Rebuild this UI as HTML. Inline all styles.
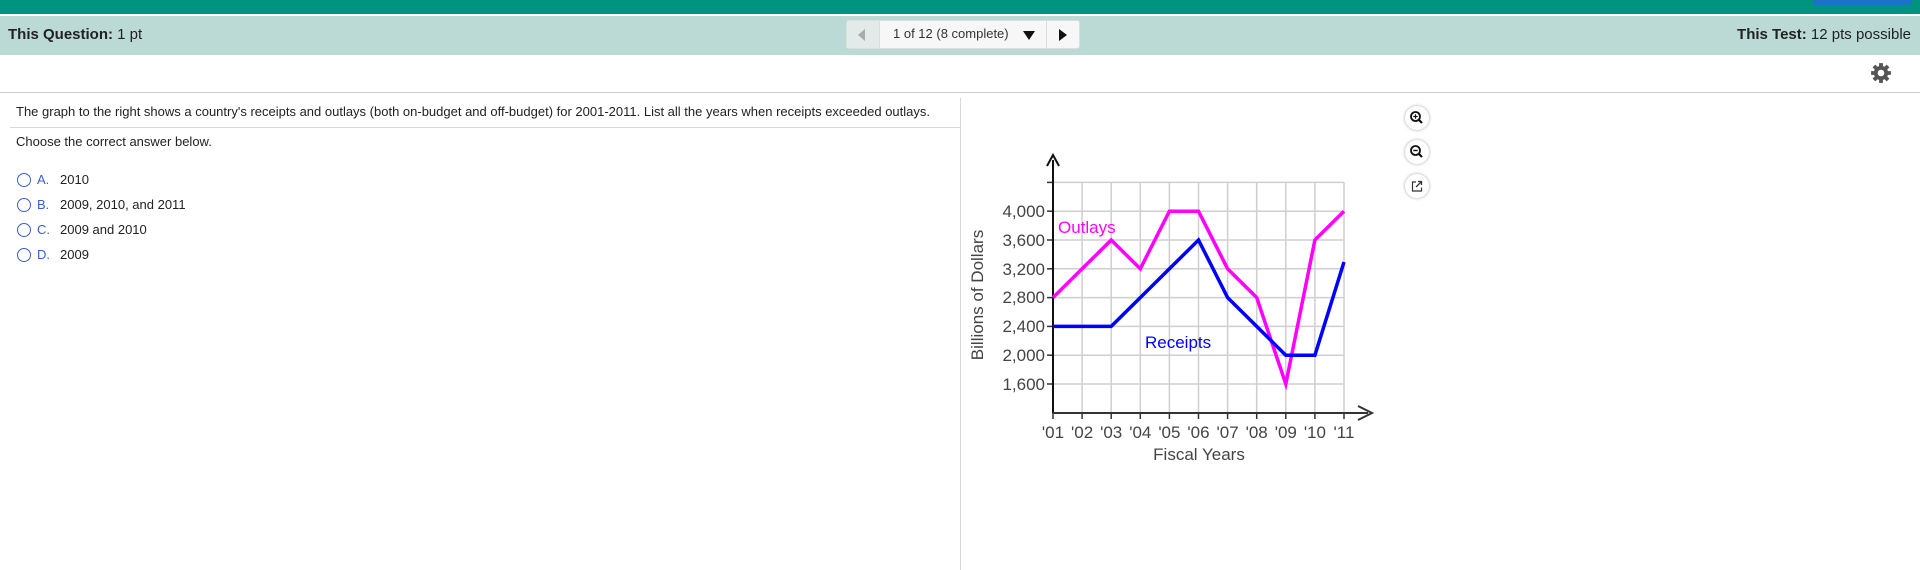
<!DOCTYPE html>
<html><head><meta charset="utf-8"><style>
*{margin:0;padding:0;box-sizing:border-box}
body{width:1920px;height:570px;overflow:hidden;background:#fff;font-family:"Liberation Sans",Arial,sans-serif;position:relative}
.abs{position:absolute}
.q{font-size:13px;color:#222;white-space:nowrap}
.opt{position:absolute;left:17px;font-size:13px;color:#222;white-space:nowrap;height:16px;line-height:16px}
.opt .c{position:absolute;left:0;top:1px;width:14px;height:14px;border:1.5px solid #3a5fcd;border-radius:50%}
.opt .l{position:absolute;left:20px;color:#3a5fcd}
.opt .t{position:absolute;left:43px}
.ib{position:absolute;left:1405px;width:24px;height:24px;border-radius:50%;background:#fff;box-shadow:0 0 3px rgba(0,0,0,.35)}
</style></head><body>
<div class="abs" style="left:0;top:0;width:1920px;height:14px;background:#009380"></div>
<div class="abs" style="left:1813px;top:0;width:99px;height:5px;background:#1b73c9;border-radius:0 0 3px 3px"></div>
<div class="abs" style="left:0;top:16px;width:1920px;height:39px;background:#bcdad5"></div>
<div class="abs" style="left:8px;top:26px;font-size:15px;color:#222"><b>This Question:</b> 1 pt</div>
<div class="abs" style="right:9px;top:26px;font-size:15px;color:#222"><b>This Test:</b> 12 pts possible</div>
<div class="abs" style="left:846px;top:20px;width:234px;height:29px;background:#f7f7f7;border:1px solid #ddd;border-radius:3px"></div>
<div class="abs" style="left:847px;top:21px;width:32px;height:27px;background:#e2ebea"></div>
<div class="abs" style="left:879px;top:21px;width:1px;height:27px;background:#ddd"></div>
<div class="abs" style="left:1046px;top:21px;width:1px;height:27px;background:#ddd"></div>
<div class="abs" style="left:858px;top:29px;width:0;height:0;border-top:6px solid transparent;border-bottom:6px solid transparent;border-right:7px solid #aaa"></div>
<div class="abs" style="left:893px;top:26px;font-size:13px;color:#333">1 of 12 (8 complete)</div>
<div class="abs" style="left:1023px;top:31px;width:0;height:0;border-left:6px solid transparent;border-right:6px solid transparent;border-top:9px solid #111"></div>
<div class="abs" style="left:1059px;top:29px;width:0;height:0;border-top:6px solid transparent;border-bottom:6px solid transparent;border-left:8px solid #111"></div>
<svg class="abs" style="left:1870px;top:62px" width="22" height="22" viewBox="0 0 20 20"><g fill="#555"><circle cx="10" cy="10" r="6.5"/><g stroke="#555" stroke-width="3.5"><line x1="10" y1="1" x2="10" y2="19"/><line x1="1" y1="10" x2="19" y2="10"/><line x1="3.6" y1="3.6" x2="16.4" y2="16.4"/><line x1="16.4" y1="3.6" x2="3.6" y2="16.4"/></g></g><circle cx="10" cy="10" r="3" fill="#fff"/></svg>
<div class="abs" style="left:0;top:92px;width:1920px;height:1px;background:#ccccd8"></div>
<div class="abs" style="left:960px;top:98px;width:1px;height:472px;background:#d6d6e4"></div>
<div class="abs q" style="left:16px;top:104px">The graph to the right shows a country's receipts and outlays (both on-budget and off-budget) for 2001-2011. List all the years when receipts exceeded outlays.</div>
<div class="abs" style="left:10px;top:127px;width:950px;height:1px;background:#d6d6e4"></div>
<div class="abs q" style="left:16px;top:134px">Choose the correct answer below.</div>
<div class="opt" style="top:172px"><span class="c"></span><span class="l">A.</span><span class="t">2010</span></div>
<div class="opt" style="top:197px"><span class="c"></span><span class="l">B.</span><span class="t">2009, 2010, and 2011</span></div>
<div class="opt" style="top:222px"><span class="c"></span><span class="l">C.</span><span class="t">2009 and 2010</span></div>
<div class="opt" style="top:247px"><span class="c"></span><span class="l">D.</span><span class="t">2009</span></div>
<div class="ib" style="top:106px"><svg width="24" height="24"><circle cx="10.5" cy="10.5" r="4.5" fill="none" stroke="#111" stroke-width="1.8"/><line x1="13.5" y1="13.5" x2="17" y2="17" stroke="#111" stroke-width="2.2"/><line x1="8.3" y1="10.5" x2="12.7" y2="10.5" stroke="#111" stroke-width="1.2"/><line x1="10.5" y1="8.3" x2="10.5" y2="12.7" stroke="#111" stroke-width="1.2"/></svg></div>
<div class="ib" style="top:140px"><svg width="24" height="24"><circle cx="10.5" cy="10.5" r="4.5" fill="none" stroke="#111" stroke-width="1.8"/><line x1="13.5" y1="13.5" x2="17" y2="17" stroke="#111" stroke-width="2.2"/><line x1="8.3" y1="10.5" x2="12.7" y2="10.5" stroke="#111" stroke-width="1.4"/></svg></div>
<div class="ib" style="top:174px"><svg width="24" height="24"><path d="M11 8H7.5v9h9v-3.5" fill="none" stroke="#333" stroke-width="1.2"/><path d="M11 13l5-5M13 7.5h3.5V11" fill="none" stroke="#333" stroke-width="1.3"/></svg></div>
<svg class="abs" style="left:0;top:0" width="1920" height="570">
<g stroke="#cfcfcf" stroke-width="1.5">
<line x1="1082.1" y1="182" x2="1082.1" y2="413"/><line x1="1111.2" y1="182" x2="1111.2" y2="413"/><line x1="1140.3" y1="182" x2="1140.3" y2="413"/><line x1="1169.4" y1="182" x2="1169.4" y2="413"/><line x1="1198.5" y1="182" x2="1198.5" y2="413"/><line x1="1227.6" y1="182" x2="1227.6" y2="413"/><line x1="1256.7" y1="182" x2="1256.7" y2="413"/><line x1="1285.8" y1="182" x2="1285.8" y2="413"/><line x1="1314.9" y1="182" x2="1314.9" y2="413"/><line x1="1344" y1="182" x2="1344" y2="413"/>
<line x1="1053" y1="182.4" x2="1344" y2="182.4"/><line x1="1053" y1="211.2" x2="1344" y2="211.2"/><line x1="1053" y1="240" x2="1344" y2="240"/><line x1="1053" y1="268.8" x2="1344" y2="268.8"/><line x1="1053" y1="297.6" x2="1344" y2="297.6"/><line x1="1053" y1="326.4" x2="1344" y2="326.4"/><line x1="1053" y1="355.2" x2="1344" y2="355.2"/><line x1="1053" y1="384" x2="1344" y2="384"/>
</g>
<g stroke="#333" stroke-width="1.5">
<line x1="1047" y1="182.4" x2="1053" y2="182.4"/><line x1="1047" y1="211.2" x2="1053" y2="211.2"/><line x1="1047" y1="240" x2="1053" y2="240"/><line x1="1047" y1="268.8" x2="1053" y2="268.8"/><line x1="1047" y1="297.6" x2="1053" y2="297.6"/><line x1="1047" y1="326.4" x2="1053" y2="326.4"/><line x1="1047" y1="355.2" x2="1053" y2="355.2"/><line x1="1047" y1="384" x2="1053" y2="384"/>
<line x1="1053" y1="413" x2="1053" y2="419"/><line x1="1082.1" y1="413" x2="1082.1" y2="419"/><line x1="1111.2" y1="413" x2="1111.2" y2="419"/><line x1="1140.3" y1="413" x2="1140.3" y2="419"/><line x1="1169.4" y1="413" x2="1169.4" y2="419"/><line x1="1198.5" y1="413" x2="1198.5" y2="419"/><line x1="1227.6" y1="413" x2="1227.6" y2="419"/><line x1="1256.7" y1="413" x2="1256.7" y2="419"/><line x1="1285.8" y1="413" x2="1285.8" y2="419"/><line x1="1314.9" y1="413" x2="1314.9" y2="419"/><line x1="1344" y1="413" x2="1344" y2="419"/>
</g>
<line x1="1053" y1="160" x2="1053" y2="413" stroke="#111" stroke-width="2"/>
<path d="M1047 166L1053 155L1059 166" fill="none" stroke="#111" stroke-width="2"/>
<line x1="1053" y1="413" x2="1368" y2="413" stroke="#333" stroke-width="2"/>
<path d="M1358 406L1372 413L1358 420" fill="none" stroke="#333" stroke-width="2"/>
<polyline fill="none" stroke="#ff00ff" stroke-width="3.5" points="1053,297.6 1082.1,268.8 1111.2,240 1140.3,268.8 1169.4,211.2 1198.5,211.2 1227.6,268.8 1256.7,297.6 1285.8,384 1314.9,240 1344,211.2"/>
<polyline fill="none" stroke="#0000ff" stroke-width="3.5" points="1053,326.4 1082.1,326.4 1111.2,326.4 1140.3,297.6 1169.4,268.8 1198.5,240 1227.6,297.6 1256.7,326.4 1285.8,355.2 1314.9,355.2 1344,262"/>
<g font-family="Liberation Sans,Arial,sans-serif" font-size="17" fill="#444" text-anchor="end">
<text x="1045" y="217">4,000</text><text x="1045" y="246">3,600</text><text x="1045" y="275">3,200</text><text x="1045" y="303">2,800</text><text x="1045" y="332">2,400</text><text x="1045" y="361">2,000</text><text x="1045" y="390">1,600</text>
</g>
<g font-family="Liberation Sans,Arial,sans-serif" font-size="17" fill="#444" text-anchor="middle">
<text x="1053" y="438">'01</text><text x="1082.1" y="438">'02</text><text x="1111.2" y="438">'03</text><text x="1140.3" y="438">'04</text><text x="1169.4" y="438">'05</text><text x="1198.5" y="438">'06</text><text x="1227.6" y="438">'07</text><text x="1256.7" y="438">'08</text><text x="1285.8" y="438">'09</text><text x="1314.9" y="438">'10</text><text x="1344" y="438">'11</text>
<text x="1199" y="460">Fiscal Years</text>
<text transform="translate(983,295) rotate(-90)">Billions of Dollars</text>
</g>
<text x="1058" y="233" font-family="Liberation Sans,Arial,sans-serif" font-size="17" fill="#ff00ff">Outlays</text>
<text x="1145" y="348" font-family="Liberation Sans,Arial,sans-serif" font-size="17" fill="#0000ff">Receipts</text>
</svg>
</body></html>
